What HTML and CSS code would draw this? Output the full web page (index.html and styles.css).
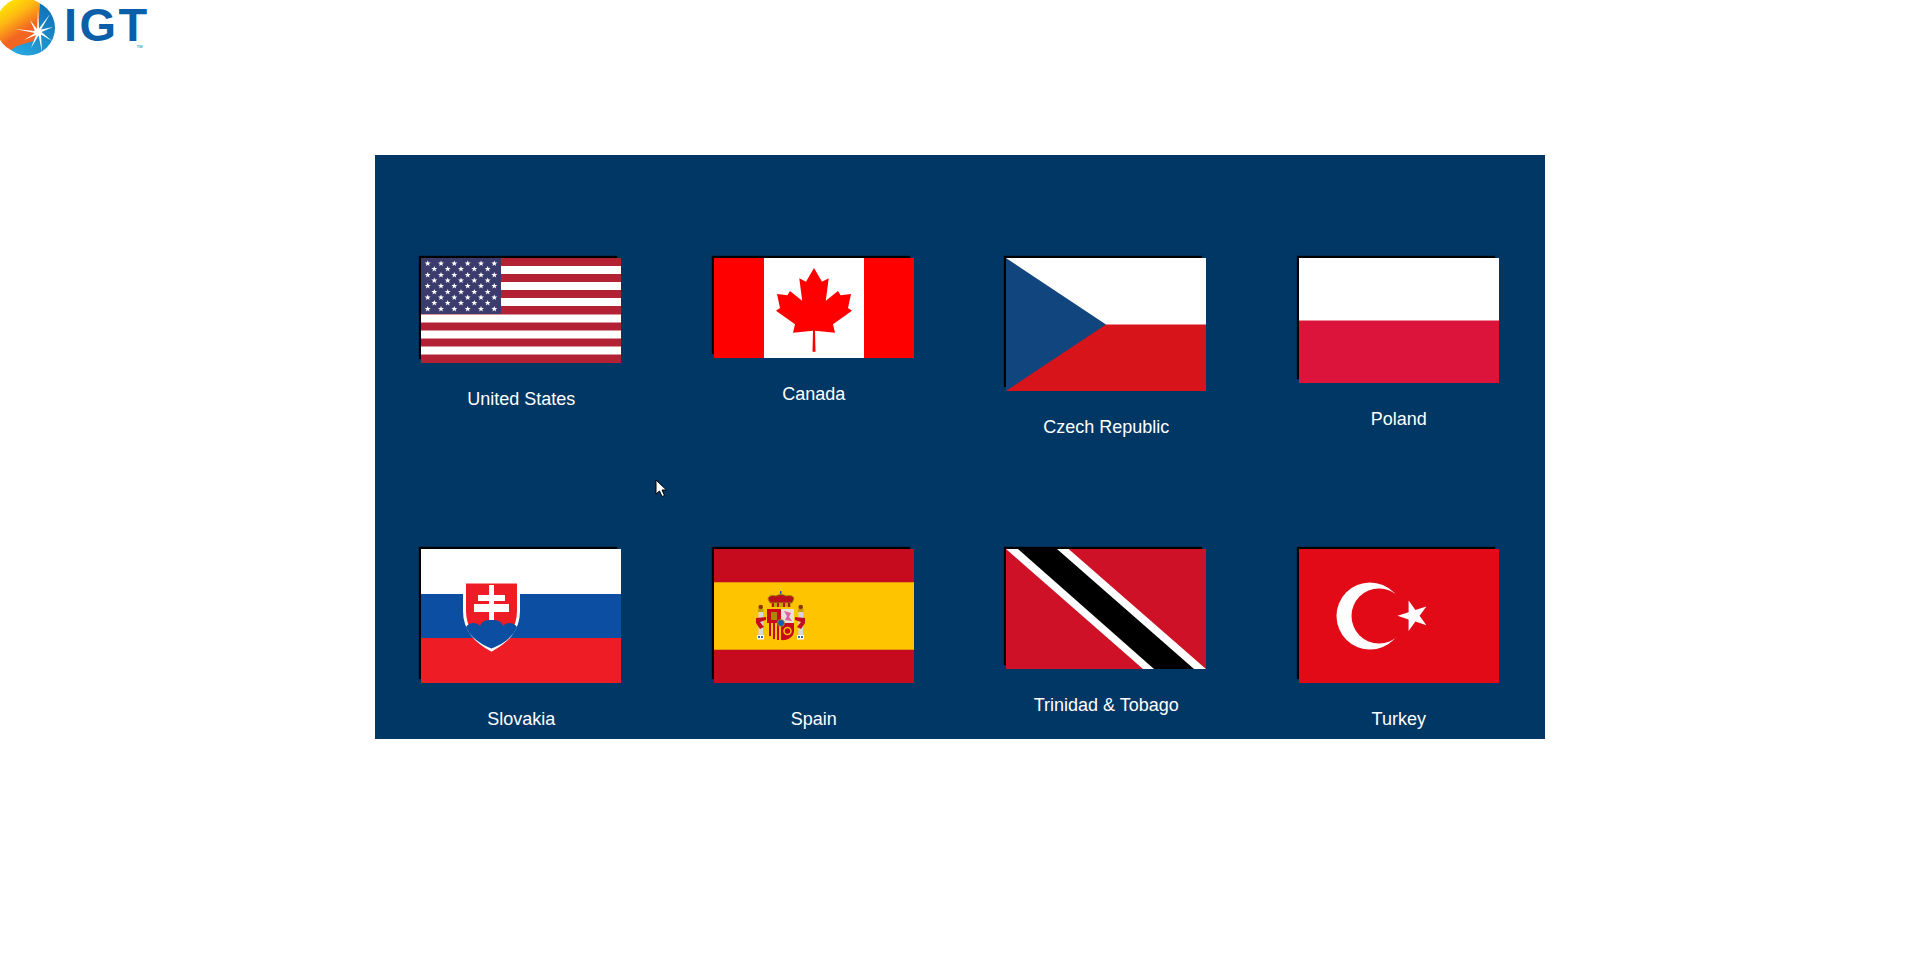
FILE: index.html
```html
<!DOCTYPE html>
<html>
<head>
    <title>Select Country</title>
    <link rel="stylesheet" href="styles.css">
</head>
<body>
<header class="brand">
    <svg class="brand-mark" width="55" height="56" viewBox="0 0 55 56">
        <defs>
            <linearGradient id="sun" x1="0.2" y1="0.1" x2="0.6" y2="0.8">
                <stop offset="0" stop-color="#ffe600"/>
                <stop offset="0.4" stop-color="#fdb913"/>
                <stop offset="0.85" stop-color="#f26522"/>
            </linearGradient>
            <linearGradient id="sea" x1="0.9" y1="0.1" x2="0.3" y2="1">
                <stop offset="0" stop-color="#0f6fb5"/>
                <stop offset="1" stop-color="#27a9e1"/>
            </linearGradient>
        </defs>
        <circle cx="27.5" cy="28" r="27.5" fill="url(#sea)"/>
        <path d="M40 3.500A27.500 27.500 0 1 0 11 50C18 44 26 44 33 41L38 32Z" fill="url(#sun)"/>
        <polygon fill="#fff" points="38,9 39,28.500 50,14 41,29.500 53,27 41.500,32 52,41 41,34.500 42,52 38.600,35.500 31,48 36,35 24,40 35,33 15,29 35,31 30,20 37,29"/>
        <circle cx="38" cy="32" r="3.500" fill="#fff"/>
    </svg>
    <span class="brand-name">IGT</span>
    <span class="brand-tm">TM</span>
</header>

<main class="panel">
    <div class="country">
        <svg class="flag" width="200" height="105" viewBox="0 0 200 105">
            <defs>
                <polygon id="star" fill="#fff" points="0,-3 .8,-1 3,-1 1.200,.4 1.900,2.500 0,1.300 -1.900,2.500 -1.200,.4 -3,-1 -.8,-1"/>
                <g id="row6">
                    <use href="#star" x="6.700"/><use href="#star" x="20"/><use href="#star" x="33.300"/>
                    <use href="#star" x="46.700"/><use href="#star" x="60"/><use href="#star" x="73.300"/>
                </g>
                <g id="row5">
                    <use href="#star" x="13.300"/><use href="#star" x="26.700"/><use href="#star" x="40"/>
                    <use href="#star" x="53.300"/><use href="#star" x="66.700"/>
                </g>
            </defs>
            <rect width="200" height="105" fill="#b22234"/>
            <rect y="8" width="200" height="8" fill="#fff"/>
            <rect y="24" width="200" height="8" fill="#fff"/>
            <rect y="40" width="200" height="8" fill="#fff"/>
            <rect y="56.500" width="200" height="8" fill="#fff"/>
            <rect y="72.500" width="200" height="8" fill="#fff"/>
            <rect y="88.500" width="200" height="8" fill="#fff"/>
            <rect width="80" height="56" fill="#3c3b6e"/>
            <use href="#row6" y="5.500"/><use href="#row5" y="11"/><use href="#row6" y="17"/>
            <use href="#row5" y="22.500"/><use href="#row6" y="28"/><use href="#row5" y="34"/>
            <use href="#row6" y="39.500"/><use href="#row5" y="45"/><use href="#row6" y="51"/>
        </svg>
        <p class="country-name">United States</p>
    </div>

    <div class="country">
        <svg class="flag" width="200" height="100" viewBox="0 0 200 100">
            <rect width="200" height="100" fill="#f00"/>
            <rect x="50" width="100" height="100" fill="#fff"/>
            <polygon fill="#f00" points="100,10 108,23.700 114.700,20.300 111.800,42.700 124,33 126.600,37.300 137,36 134,50 138,52.700 119,66.300 121,74.700 101,72.700 101.500,93.700 98.500,93.700 99,72.700 79,74.700 81,66.300 62,52.700 66,50 63,36 73.400,37.300 76,33 88.200,42.700 85.300,20.300 92,23.700"/>
        </svg>
        <p class="country-name">Canada</p>
    </div>

    <div class="country">
        <svg class="flag" width="200" height="133" viewBox="0 0 200 133">
            <rect width="200" height="133" fill="#fff"/>
            <rect y="66.500" width="200" height="66.500" fill="#d7141a"/>
            <polygon points="0,0 100,66.500 0,133" fill="#11457e"/>
        </svg>
        <p class="country-name">Czech Republic</p>
    </div>

    <div class="country">
        <svg class="flag" width="200" height="125" viewBox="0 0 200 125">
            <rect width="200" height="125" fill="#fff"/>
            <rect y="62.500" width="200" height="62.500" fill="#dc143c"/>
        </svg>
        <p class="country-name">Poland</p>
    </div>

    <div class="country">
        <svg class="flag" width="200" height="134" viewBox="0 0 200 134">
            <rect width="200" height="134" fill="#fff"/>
            <rect y="45" width="200" height="44" fill="#0b4ea2"/>
            <rect y="89" width="200" height="45" fill="#ee1c25"/>
            <path d="M43.500 33H97.500V62C97.500 82 85 93 70.500 101C56 93 43.500 82 43.500 62Z" fill="#ee1c25" stroke="#fff" stroke-width="3"/>
            <path d="M68 36H73V46H84V52H73V55H88V63H73V74H68V63H53V55H68V52H57V46H68Z" fill="#fff"/>
            <path d="M45 78C48 73 56 73 59 77C61 71 67 71 70.500 71C74 71 80 71 82 77C85 73 93 73 96 78C92 88 82 95 70.500 99.500C59 95 49 88 45 78Z" fill="#0b4ea2"/>
        </svg>
        <p class="country-name">Slovakia</p>
    </div>

    <div class="country">
        <svg class="flag" width="200" height="134" viewBox="0 0 200 134">
            <rect width="200" height="134" fill="#c60b1e"/>
            <rect y="33" width="200" height="68" fill="#e8930c"/>
            <rect y="34" width="200" height="66" fill="#ffc400"/>
            <!-- crown -->
            <rect x="66" y="42" width="1.500" height="5" fill="#1d5aa8"/>
            <path d="M54 50C54 46 60 46 62 47C64 45 70 45 72 47C74 46 80 46 80 50L78 54H56Z" fill="#b5121b" stroke="#a88a00" stroke-width="1"/>
            <rect x="57" y="54" width="20" height="4" fill="#c8a000"/>
            <path d="M58 54h2v4h-2zM63 54h2v4h-2zM69 54h2v4h-2zM74 54h2v4h-2z" fill="#b5121b"/>
            <!-- pillars -->
            <rect x="44.500" y="62" width="4.500" height="24" fill="#d8d8d8"/>
            <rect x="84.500" y="62" width="4.500" height="24" fill="#d8d8d8"/>
            <rect x="44" y="60" width="5.500" height="3" fill="#c8a000"/>
            <rect x="84" y="60" width="5.500" height="3" fill="#c8a000"/>
            <circle cx="46.700" cy="58" r="2.300" fill="#8a3a00"/>
            <circle cx="86.700" cy="58" r="2.300" fill="#8a3a00"/>
            <rect x="43" y="86" width="7" height="4.500" fill="#fff"/>
            <rect x="83" y="86" width="7" height="4.500" fill="#fff"/>
            <path d="M44 87h2v2h-2zM47 87h2v2h-2z" fill="#2a6db0"/>
            <path d="M84 87h2v2h-2zM87 87h2v2h-2z" fill="#2a6db0"/>
            <path d="M42 69L52 68 52 71 46 73 50 78 46 80 42 74Z" fill="#c60b1e"/>
            <path d="M91 69L81 68 81 71 87 73 83 78 87 80 91 74Z" fill="#c60b1e"/>
            <!-- shield -->
            <rect x="53" y="60" width="14" height="14" fill="#c60b1e"/>
            <rect x="67" y="60" width="13" height="14" fill="#e8e0d8"/>
            <path d="M53 74H67V91C59 91 53 87 53 80Z" fill="#ffc400"/>
            <path d="M55 74h2v13h-2zM59 74h2v16h-2zM63 74h2v17h-2z" fill="#c60b1e"/>
            <path d="M67 74H80V82C80 88 73 92 67 91Z" fill="#c60b1e"/>
            <rect x="57" y="63" width="6" height="8" fill="#a88a00"/>
            <path d="M70 62L77 64 75 68 78 72 71 71 73 67Z" fill="#e05fa0"/>
            <circle cx="73.500" cy="82" r="3.500" fill="none" stroke="#ffc400" stroke-width="1.500"/>
            <circle cx="67" cy="74" r="3.500" fill="#1d5aa8" stroke="#c8a000" stroke-width="0.700"/>
        </svg>
        <p class="country-name">Spain</p>
    </div>

    <div class="country">
        <svg class="flag" width="200" height="120" viewBox="0 0 200 120">
            <rect width="200" height="120" fill="#ce1126"/>
            <polygon points="0,0 62.600,0 200,120 137,120" fill="#fff"/>
            <polygon points="12,0 51,0 188,120 148,120" fill="#000"/>
        </svg>
        <p class="country-name">Trinidad &amp; Tobago</p>
    </div>

    <div class="country">
        <svg class="flag" width="200" height="134" viewBox="0 0 200 134">
            <rect width="200" height="134" fill="#e30a17"/>
            <circle cx="71" cy="67" r="33.500" fill="#fff"/>
            <circle cx="80" cy="67" r="27.500" fill="#e30a17"/>
            <polygon fill="#fff" points="98.500,66.800 109.600,63.200 109.600,51.600 116.400,61 127.400,57.400 120.600,66.800 127.400,76.200 116.400,72.600 109.600,82 109.600,70.400"/>
        </svg>
        <p class="country-name">Turkey</p>
    </div>

    <svg class="pointer" width="13" height="19" viewBox="0 0 13 19">
        <path d="M1 1V15L4.500 12 7 17.500 9.500 16.500 7 11H11.500Z" fill="#fff" stroke="#000" stroke-width="1"/>
    </svg>
</main>
</body>
</html>
```

FILE: styles.css
```css
body {
    margin: 0;
    background-color: #fff;
    font-family: "Liberation Sans", Arial, sans-serif;
}
.brand {
    display: flex;
    align-items: flex-start;
    height: 155px;
    color: #0b5ea8;
}
.brand-mark {
    flex: none;
}
.brand-name {
    margin: 7px 0 0 9px;
    font-size: 47px;
    font-weight: bold;
    letter-spacing: 2.5px;
    line-height: 36px;
}
.brand-tm {
    margin: 44px 0 0 -13px;
    font-size: 4px;
    line-height: 5px;
}
.panel {
    position: relative;
    display: grid;
    grid-template-columns: repeat(4, 292.5px);
    grid-template-rows: 291px 293px;
    width: 1170px;
    margin-left: 375px;
    background-color: #003764;
}
.country {
    display: flex;
    flex-direction: column;
    align-items: center;
    padding-top: 103px;
}
.flag {
    display: block;
    box-shadow: -3px -3px 1px -1px #000;
}
.country-name {
    margin: 26px 0 0;
    color: #fff;
    font-size: 18px;
    line-height: 20px;
}
.pointer {
    position: absolute;
    left: 280px;
    top: 324px;
}
```
